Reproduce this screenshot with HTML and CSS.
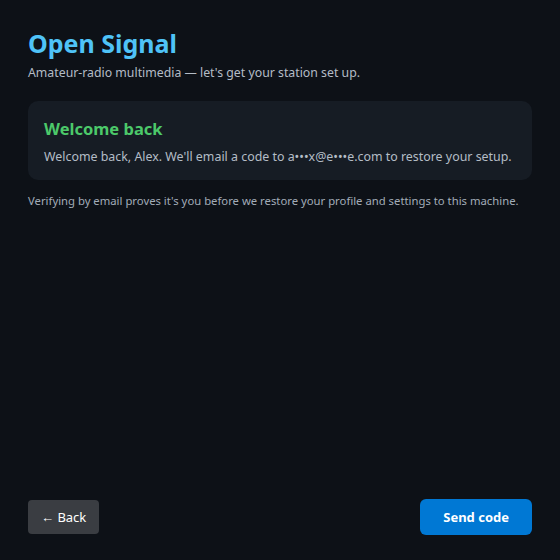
FILE: index.html
```html
<!DOCTYPE html>
<html lang="en">
<head>
    <meta charset="UTF-8">
    <meta name="viewport" content="width=device-width, initial-scale=1.0">
    <title>Open Signal</title>
    <link rel="stylesheet" href="styles.css">
</head>
<body>
    <div class="wizard">
        <div class="wizard-body">
            <h1>Open Signal</h1>
            <p class="tagline">Amateur-radio multimedia — let's get your station set up.</p>

            <div class="card">
                <h2>Welcome back</h2>
                <p>Welcome back, Alex. We'll email a code to a•••x@e•••e.com to restore your setup.</p>
            </div>

            <p class="note">Verifying by email proves it's you before we restore your profile and settings to this machine.</p>
        </div>

        <div class="wizard-footer">
            <button class="btn-secondary">← Back</button>
            <button class="btn-primary">Send code</button>
        </div>
    </div>
</body>
</html>
```

FILE: styles.css
```css
html, body {
    height: 100%;
}

body {
    margin: 0;
    font-family: "Noto Sans", "Open Sans", sans-serif;
    background: #0d1117;
    color: #c9d1d9;
}

.wizard {
    box-sizing: border-box;
    height: 100%;
    padding: 26px 28px 25px;
    display: flex;
    flex-direction: column;
}

.wizard-body {
    flex: 1;
}

h1 {
    margin: 0;
    font-size: 25px;
    font-weight: 700;
    color: #4fc3f7;
    line-height: 34px;
}

.tagline {
    margin: 4px 0 0;
    font-size: 12.3px;
    color: #b4bcc6;
}

.card {
    margin-top: 20px;
    background: #161c24;
    border-radius: 10px;
    padding: 16px 16px 15px;
}

h2 {
    margin: 0;
    font-size: 16.5px;
    font-weight: 700;
    color: #4cc96a;
    line-height: 24px;
}

.card p {
    margin: 7px 0 0;
    font-size: 12.4px;
    color: #b4bcc6;
}

.note {
    margin: 13px 0 0;
    font-size: 11.3px;
    color: #a2acb8;
}

.wizard-footer {
    display: flex;
    justify-content: space-between;
    align-items: center;
}

button {
    font-family: inherit;
    border: none;
    cursor: pointer;
    color: white;
}

.btn-secondary {
    background: #3a3d42;
    font-size: 13px;
    padding: 0 13px;
    height: 34px;
    border-radius: 4px;
}

.btn-primary {
    background: #0078d4;
    font-size: 13px;
    font-weight: 700;
    padding: 0 23px;
    height: 36px;
    border-radius: 6px;
}
```
